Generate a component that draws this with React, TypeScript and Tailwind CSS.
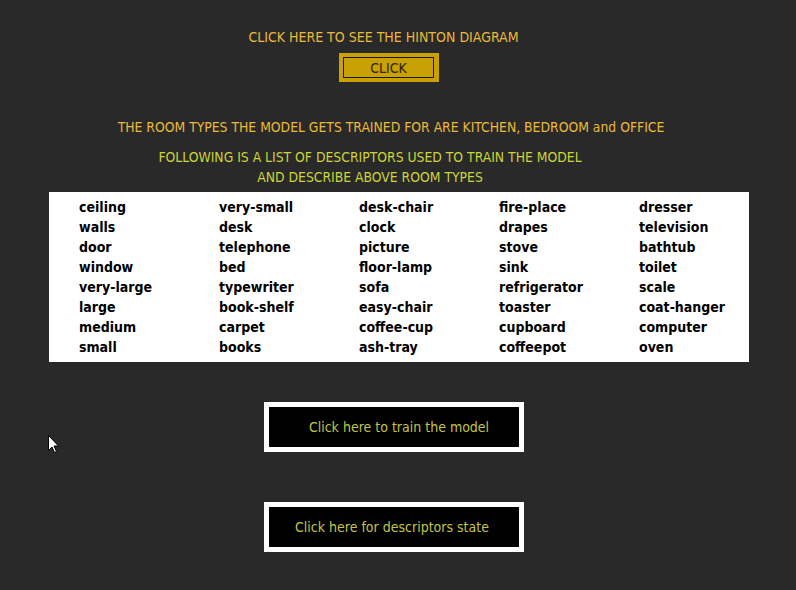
import React from "react";

const cols = [
  ["ceiling", "walls", "door", "window", "very-large", "large", "medium", "small"],
  ["very-small", "desk", "telephone", "bed", "typewriter", "book-shelf", "carpet", "books"],
  ["desk-chair", "clock", "picture", "floor-lamp", "sofa", "easy-chair", "coffee-cup", "ash-tray"],
  ["fire-place", "drapes", "stove", "sink", "refrigerator", "toaster", "cupboard", "coffeepot"],
  ["dresser", "television", "bathtub", "toilet", "scale", "coat-hanger", "computer", "oven"],
];

const rows = Array.from({ length: 8 }, (_, r) => cols.map((c) => c[r]));

export default function App() {
  return (
    <div
      className="relative w-[796px] h-[590px] bg-[#292929] flex flex-col items-center overflow-hidden"
      style={{ fontFamily: '"DejaVu Sans Condensed", "DejaVu Sans", sans-serif' }}
    >
      <div className="mt-[28px] h-[18px] leading-[18px] text-[14px] text-[#eab93c] ml-[-29px]">
        CLICK HERE TO SEE THE HINTON DIAGRAM
      </div>
      <div className="mt-[7px] ml-[-19px] w-[100px] h-[29px] bg-[#c9a102] flex items-center justify-center">
        <div className="w-[91px] h-[21px] border border-[#1a1a00] flex items-center justify-center text-[14px] text-[#2a2200] leading-none">
          CLICK
        </div>
      </div>
      <div className="mt-[36px] ml-[-14px] h-[18px] leading-[18px] text-[13.8px] text-[#eab93c]">
        THE ROOM TYPES THE MODEL GETS TRAINED FOR ARE KITCHEN, BEDROOM and OFFICE
      </div>
      <div className="mt-[11px] ml-[-56px] text-center leading-[20px] text-[13.8px] text-[#cbd43a]">
        <div>FOLLOWING IS A LIST OF DESCRIPTORS USED TO TRAIN THE MODEL</div>
        <div>AND DESCRIBE ABOVE ROOM TYPES</div>
      </div>
      <div className="mt-[5px] ml-[2px] w-[700px] h-[170px] bg-white pl-[30px] py-[5px]">
        {rows.map((row, i) => (
          <div key={i} className="grid grid-cols-[140px_140px_140px_140px_140px] h-[20px] items-center">
            {row.map((w, j) => (
              <div key={j} className="text-[14px] leading-[20px] text-black font-semibold">
                {w}
              </div>
            ))}
          </div>
        ))}
      </div>
      <div className="mt-[40px] ml-[-8px] w-[260px] h-[50px] bg-white p-[5px]">
        <div className="w-full h-full bg-black flex items-center justify-center pl-[10px] text-[14px] text-[#c3c44a]">
          Click here to train the model
        </div>
      </div>
      <div className="mt-[50px] ml-[-8px] w-[260px] h-[50px] bg-white p-[5px]">
        <div className="w-full h-full bg-black flex items-center justify-center pr-[4px] text-[14px] text-[#c3c44a]">
          Click here for descriptors state
        </div>
      </div>
      <svg className="absolute left-[48px] top-[435px]" width="12" height="19" viewBox="0 0 12 19">
        <path d="M0.5 0.5 L0.5 15.5 L4 12 L6.5 17.5 L8.5 16.5 L6 11 L10.5 11 Z" fill="white" stroke="black" strokeWidth="1" />
      </svg>
    </div>
  );
}
